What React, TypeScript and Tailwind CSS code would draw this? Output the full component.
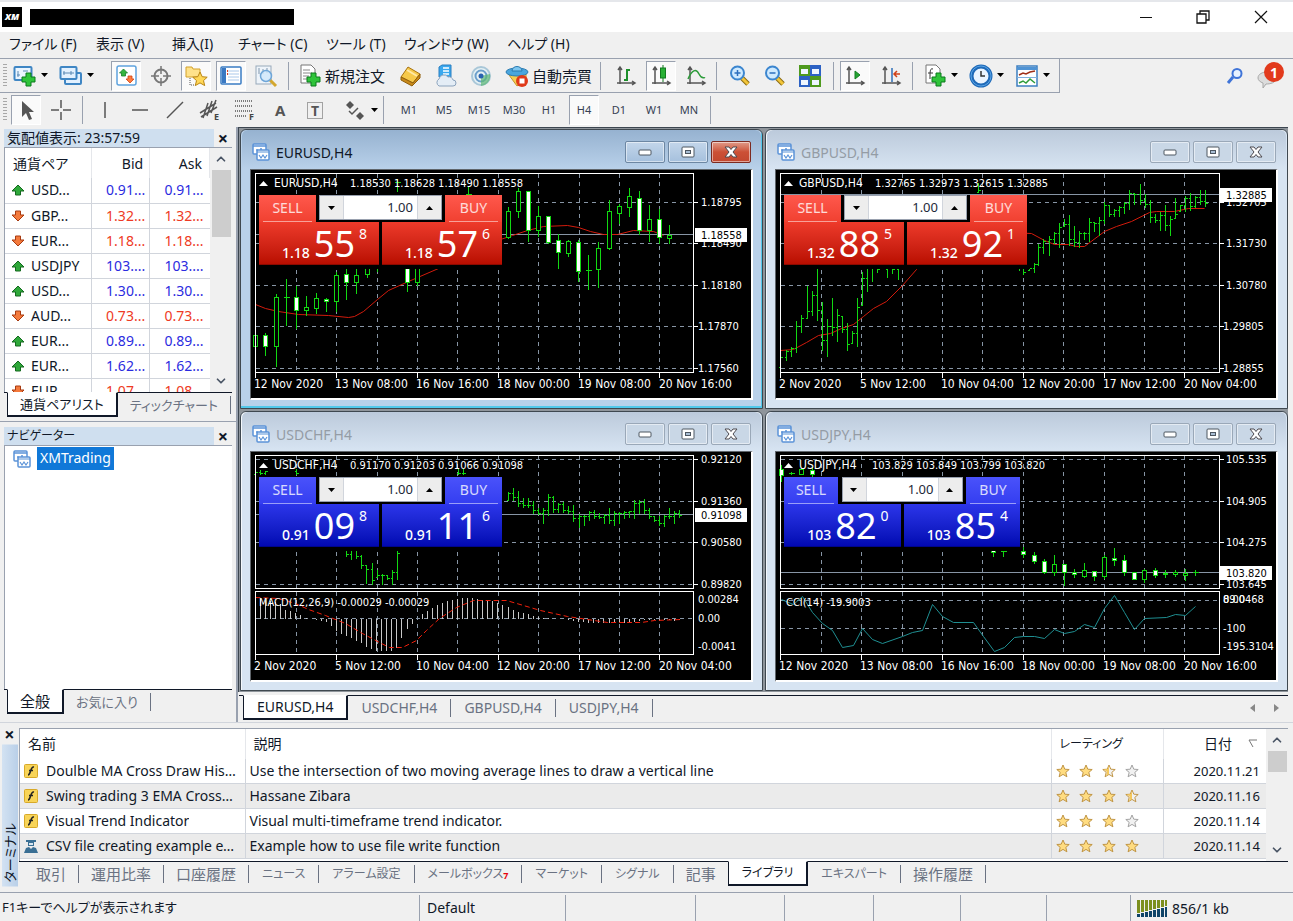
import React, { useState } from 'react';
import clsx from 'clsx';
import { ChevronDown, ChevronUp } from 'lucide-react';

type Bar = [x: number, high: number, low: number];
type Candle = [x: number, high: number, low: number, top: number, bottom: number, filled: 0 | 1];
type Label = [y: number, text: string];

interface ChartData {
  symbol: string;
  quotes: string;
  quotesX: number;
  gridY: number[];
  priceY: number;
  price: string;
  right: number;
  prices: Label[];
  times: string[];
  bars?: Bar[];
  candles?: Candle[];
  average?: string;
  indicator?: 'macd' | 'cci';
  tone: 'red' | 'blue';
  compact?: boolean;
  sell: [string, string, string];
  buy: [string, string, string];
}

const TIMES_LONG = ['2 Nov 2020', '5 Nov 12:00', '10 Nov 04:00', '12 Nov 20:00', '17 Nov 12:00', '20 Nov 04:00'];
const TIMES_SHORT = ['12 Nov 2020', '13 Nov 08:00', '16 Nov 16:00', '18 Nov 00:00', '19 Nov 08:00', '20 Nov 16:00'];
const GRID_X = [45, 85, 126, 166, 206, 247, 287, 328, 368, 408];

const charts: ChartData[] = [
  {
    symbol: 'EURUSD,H4',
    quotes: '1.18530 1.18628 1.18490 1.18558',
    quotesX: 99,
    gridY: [32, 73, 115, 156, 198],
    priceY: 64,
    price: '1.18558',
    right: 442,
    prices: [[32, '1.18795'], [73, '1.18490'], [115, '1.18180'], [156, '1.17870'], [198, '1.17560']],
    times: TIMES_SHORT,
    candles: [
      [4, 156, 180, 165, 176, 0], [14, 162, 185, 165, 176, 1], [25, 123, 196, 127, 176, 0], [35, 108, 155, 127, 127, 0],
      [45, 115, 158, 127, 140, 1], [55, 125, 145, 137, 140, 0], [65, 122, 143, 128, 138, 0], [75, 127, 141, 129, 131, 1],
      [85, 101, 141, 105, 131, 0], [95, 97, 129, 104, 112, 1], [105, 98, 123, 105, 112, 0], [116, 90, 107, 90, 104, 0],
      [126, 90, 101, 90, 90, 0], [146, 8, 21, 12, 12, 0], [156, 90, 121, 90, 112, 1], [166, 90, 115, 90, 112, 0],
      [217, 16, 24, 24, 24, 0], [257, 36, 68, 41, 67, 0], [267, 17, 47, 21, 41, 0], [277, 21, 71, 21, 60, 1],
      [287, 35, 66, 46, 60, 0], [297, 45, 73, 46, 72, 1], [307, 63, 98, 70, 82, 1], [317, 69, 86, 71, 83, 0],
      [327, 69, 111, 72, 101, 1], [337, 84, 119, 100, 100, 0], [347, 71, 117, 78, 99, 0], [358, 29, 79, 41, 78, 0],
      [368, 33, 53, 36, 43, 0], [378, 17, 46, 26, 37, 0], [388, 20, 64, 28, 60, 1], [398, 34, 71, 49, 60, 0],
      [408, 38, 73, 49, 67, 1], [418, 54, 73, 65, 68, 0],
    ],
    average:
      'M4 134 14 138 27 141 47 144 77 145 97 147 103 146 112 141 126 129 137 120 157 111 187 98 210 86 240 72 261 65 276 60 292 56 316 55 327 57 339 61 352 64 366 64 382 60 402 61 412 65',
    tone: 'red',
    sell: ['1.18', '55', '8'],
    buy: ['1.18', '57', '6'],
  },
  {
    symbol: 'GBPUSD,H4',
    quotes: '1.32765 1.32973 1.32615 1.32885',
    quotesX: 99,
    gridY: [32, 73, 115, 156, 198],
    priceY: 24,
    price: '1.32885',
    right: 443,
    prices: [[32, '1.32705'], [73, '1.31730'], [115, '1.30780'], [156, '1.29805'], [198, '1.28855']],
    times: TIMES_LONG,
    bars: [
      [4, 185, 197], [10, 179, 190], [15, 176, 186], [20, 150, 182], [25, 144, 162], [31, 115, 148], [36, 120, 145],
      [41, 98, 150], [46, 131, 180], [51, 148, 186], [56, 127, 165], [61, 138, 171], [66, 146, 162], [71, 152, 180],
      [76, 160, 173], [81, 127, 176], [86, 101, 135], [91, 90, 121], [96, 90, 111], [101, 85, 102], [111, 85, 107],
      [116, 85, 103], [122, 90, 109], [202, 12, 22], [243, 92, 100], [247, 92, 104], [253, 98, 100], [258, 92, 102],
      [262, 73, 95], [267, 68, 83], [273, 65, 85], [278, 61, 73], [283, 52, 77], [288, 48, 56], [293, 44, 75],
      [298, 55, 76], [303, 60, 77], [308, 61, 69], [313, 47, 71], [318, 51, 61], [323, 46, 65], [328, 31, 53],
      [333, 34, 46], [338, 38, 46], [343, 35, 46], [348, 31, 43], [353, 19, 39], [358, 22, 34], [364, 13, 34],
      [369, 23, 37], [374, 29, 52], [379, 43, 52], [384, 41, 60], [389, 34, 60], [394, 45, 65], [399, 27, 48],
      [404, 34, 41], [409, 25, 41], [414, 22, 40], [419, 25, 37], [424, 19, 34], [429, 19, 36],
    ],
    average:
      'M4 180 17 179 30 172 42 165 54 163 65 158 77 154 87 146 97 138 110 131 126 115 140 99 180 60 255 63 268 70 278 74 292 74 300 76 308 76 328 61 340 56 355 51 373 42 380 41 398 41 412 38 428 38',
    tone: 'red',
    sell: ['1.32', '88', '5'],
    buy: ['1.32', '92', '1'],
  },
  {
    symbol: 'USDCHF,H4',
    quotes: '0.91170 0.91203 0.91066 0.91098',
    quotesX: 99,
    gridY: [7, 49, 90, 132],
    priceY: 62,
    price: '0.91098',
    right: 442,
    prices: [[7, '0.92120'], [49, '0.91360'], [90, '0.90580'], [132, '0.89820'], [147, '0.00284'], [166, '0.00'], [194, '-0.0041']],
    times: TIMES_LONG,
    bars: [
      [4, 10, 22], [9, 17, 22], [14, 18, 22], [45, 16, 22], [207, 16, 22], [212, 16, 22], [95, 96, 104], [100, 96, 107],
      [105, 96, 106], [110, 102, 116], [115, 113, 131], [121, 110, 132], [126, 117, 125], [131, 121, 132], [136, 122, 127],
      [141, 117, 132], [146, 94, 127], [257, 39, 48], [262, 35, 48], [267, 38, 54], [272, 45, 55], [277, 45, 55],
      [282, 48, 61], [287, 55, 62], [292, 55, 71], [297, 41, 63], [302, 43, 60], [307, 50, 60], [312, 49, 60],
      [317, 53, 61], [322, 52, 69], [328, 61, 75], [333, 62, 73], [338, 58, 68], [343, 57, 66], [348, 60, 66],
      [353, 61, 71], [358, 55, 71], [363, 58, 73], [368, 59, 71], [373, 58, 66], [378, 58, 65], [383, 47, 66],
      [388, 47, 61], [393, 46, 61], [398, 55, 66], [403, 63, 69], [408, 63, 73], [413, 62, 74], [418, 55, 66],
      [423, 58, 71], [428, 57, 65],
    ],
    indicator: 'macd',
    tone: 'blue',
    sell: ['0.91', '09', '8'],
    buy: ['0.91', '11', '6'],
  },
  {
    symbol: 'USDJPY,H4',
    quotes: '103.829 103.849 103.799 103.820',
    quotesX: 96,
    gridY: [7, 49, 90, 132],
    priceY: 120,
    price: '103.820',
    right: 443,
    prices: [[7, '105.535'], [49, '104.905'], [90, '104.275'], [132, '103.645'], [147, '89.0468'], [147, '0.00'], [176, '-100'], [194, '-195.3104']],
    times: TIMES_SHORT,
    candles: [
      [5, 12, 29, 17, 23, 1], [15, 19, 22, 21, 21, 0], [25, 16, 22, 17, 22, 0], [36, 14, 24, 18, 22, 1],
      [217, 94, 104, 98, 100, 1], [227, 99, 104, 99, 99, 0], [247, 94, 105, 99, 102, 1], [258, 99, 111, 103, 109, 1],
      [268, 106, 121, 109, 120, 1], [278, 102, 123, 112, 120, 0], [288, 111, 133, 112, 120, 1], [298, 116, 125, 120, 122, 1],
      [308, 110, 125, 118, 124, 0], [318, 119, 128, 119, 124, 1], [328, 102, 126, 105, 124, 0], [338, 95, 113, 106, 108, 1],
      [348, 102, 123, 108, 120, 1], [358, 120, 127, 120, 127, 1], [368, 116, 130, 118, 127, 0], [379, 115, 125, 118, 123, 1],
      [389, 117, 125, 121, 122, 0], [399, 117, 124, 120, 122, 0], [409, 116, 128, 121, 123, 0], [419, 117, 123, 120, 120, 0],
    ],
    indicator: 'cci',
    tone: 'blue',
    compact: true,
    sell: ['103', '82', '0'],
    buy: ['103', '85', '4'],
  },
];

const MACD_LEVELS = [
  -20, -20, -19, -18, -17, -15, -9, -8, -6, -4, -1, 0, 1, 2, 3, 7, 12, 15, 17, 19, 22, 24, 28, 30, 32, 32, 32, 32, 29, 19,
  10, 5, 0, -5, -8, -11, -14, -16, -18, -19, -20, -21, -21, -21, -20, -19, -18, -18, -16, -14, -12, -9, -7, -6, -5, -3, -2,
  -1, -1, 0, 0, 0, 1, 2, 3, 3, 4, 4, 4, 4, 4, 4, 4, 4, 3, 3, 2, 1, 1, 1, 2, 1, 1, 2, 1,
];
const MACD_SIGNAL =
  'M4 145 27 146 44 151 57 157 74 163 94 171 111 181 128 190 138 195 151 195 165 188 175 178 188 166 205 155 222 148 255 148 289 158 316 164 336 167 356 170 390 170 403 168 430 167';
const CCI_LINE =
  'M5 147 17 152 26 144 36 160 46 171 56 178 66 195 77 193 86 176 96 187 106 191 126 184 136 180 146 178 156 152 166 164 177 170 197 170 207 184 218 199 228 195 238 185 247 184 258 184 268 186 278 177 288 181 298 179 308 172 318 175 328 156 338 143 348 160 358 177 368 166 390 165 399 162 409 163 419 154';

// Open and close ticks lean towards the neighbouring bars
const barPath = (bars: Bar[]) => {
  let previous = bars[0][2];
  return bars
    .map(([x, high, low], i) => {
      const next = bars[i + 1] ?? bars[i];
      const rising = next[1] + next[2] < high + low;
      const open = Math.min(Math.max(previous, high), low);
      const close = Math.round(rising ? high + (low - high) * 0.2 : high + (low - high) * 0.8);
      previous = close;
      return `M${x} ${high}V${low}M${x - 2} ${open}H${x}M${x} ${close}H${x + 2}`;
    })
    .join('');
};

const CHART_FONT = "font-['DejaVu_Sans_Condensed','Noto_Sans',sans-serif]";

const Chart: React.FC<{ data: ChartData }> = ({ data }) => {
  const { right, indicator, priceY } = data;
  const mainBottom = indicator ? 136 : 202;
  return (
    <svg className={clsx('block h-[228px] w-full bg-black', CHART_FONT)} role="img" aria-label={data.symbol}>
      <g transform="translate(0.5 0.5)" shapeRendering="crispEdges" fill="none">
        <g stroke="#8795a5" strokeDasharray="4 4">
          {data.gridY.map((y) => <path key={y} d={`M4 ${y}H${right}`} />)}
          {GRID_X.map((x) => <path key={x} d={`M${x} 3V202`} />)}
          {indicator === 'macd' && <path d={`M4 166H${right}`} />}
          {indicator === 'cci' && <path d={`M4 148H${right}M4 176H${right}`} />}
        </g>
        <path d={`M4 ${priceY}H${right}`} stroke="#8795a5" />
        {data.average && <path d={data.average} stroke="#d21b0c" shapeRendering="auto" />}
        {data.bars && <path d={barPath(data.bars)} stroke="#12d812" />}
        {data.candles?.map(([x, high, low, top, bottom, filled]) => (
          <g key={x} stroke="#12d812">
            <path d={`M${x} ${high}V${low}`} />
            <rect x={x - 2} y={top} width={4} height={bottom - top} fill={filled ? '#fff' : '#000'} />
            {top === bottom && <path d={`M${x - 3} ${top}H${x + 3}`} />}
          </g>
        ))}
        {indicator === 'macd' && (
          <>
            <path d={MACD_LEVELS.map((v, i) => `M${4 + Math.round(i * 5.05)} 166v${v}`).join('')} stroke="#c8c8c8" />
            <path d={MACD_SIGNAL} stroke="#f0200c" strokeDasharray="5 3" shapeRendering="auto" />
          </>
        )}
        {indicator === 'cci' && <path d={CCI_LINE} stroke="#1f8f92" shapeRendering="auto" />}
        <g stroke="#fff">
          <path d={`M4 3H${right}V${mainBottom}H4Z`} />
          {indicator && <path d={`M4 139H${right}V202H4Z`} />}
          <path d={data.gridY.map((y) => `M${right} ${y}h4`).join('')} />
          <path d={[4, 85, 166, 247, 328, 408].map((x) => `M${x} 202v5`).join('')} />
        </g>
      </g>
      <g fill="#fff" fontSize={11}>
        <path d="M8 16h9l-4.500-5z" />
        <text x={23} y={17} fontSize={12}>{data.symbol}</text>
        <text x={data.quotesX} y={17}>{data.quotes}</text>
        {indicator === 'macd' && <text x={8} y={154}>MACD(12,26,9) -0.00029 -0.00029</text>}
        {indicator === 'cci' && <text x={10} y={154}>CCI(14) -19.9003</text>}
        {data.prices.map(([y, text]) => (
          <text key={text} x={y > 140 ? 447 : 450} y={y + 4}>{text}</text>
        ))}
        <g fontSize={12}>
          {data.times.map((time, i) => <text key={time} x={3 + i * 81} y={218}>{time}</text>)}
        </g>
      </g>
      <rect x={444} y={priceY - 6} width={52} height={14} fill="#fff" />
      <text x={450} y={priceY + 5} fontSize={11}>{data.price}</text>
    </svg>
  );
};

const Price: React.FC<{ parts: [string, string, string]; tone: 'red' | 'blue'; side: string }> = ({ parts, tone, side }) => (
  <button
    aria-label={`${side} ${parts.join('')}`}
    className={clsx(
      'flex h-[43px] flex-1 items-start justify-end border-b pr-3 text-white',
      tone === 'red'
        ? 'border-[#8c0a00] bg-linear-to-b from-[#ee3a2a] to-[#b90d00]'
        : 'border-[#00068c] bg-linear-to-b from-[#2c35ea] to-[#0208b2]',
    )}
  >
    <span className="mt-[21px] mr-1 text-[14px] leading-[20px] font-medium">{parts[0]}</span>
    <span className="text-[36px] leading-[44px]">{parts[1]}</span>
    <span className="mt-[2px] ml-1 text-[14px] leading-[20px]">{parts[2]}</span>
  </button>
);

const SideLabel: React.FC<{ tone: 'red' | 'blue'; compact?: boolean; children: string }> = ({ tone, compact, children }) => (
  <button
    className={clsx(
      'flex h-[27px] flex-col items-center justify-between px-1 text-[14px] leading-[25px] text-white/80',
      compact ? 'w-[54px]' : 'w-[57px]',
      tone === 'red' ? 'bg-linear-to-b from-[#ff584c] to-[#f04030]' : 'bg-linear-to-b from-[#4a52fb] to-[#343df0]',
    )}
  >
    {children}
    <span className="h-px w-full bg-white/50" />
  </button>
);

const TradePanel: React.FC<{ data: ChartData }> = ({ data }) => {
  const [lots, setLots] = useState('1.00');
  const step = (delta: number) => setLots(Math.max(0.01, Number(lots) + delta).toFixed(2));
  return (
    <div className={clsx('absolute top-[25px] left-2 bg-black pb-1', data.compact ? 'w-[236px]' : 'w-[243px]')}>
      <div className="flex justify-between">
        <SideLabel tone={data.tone} compact={data.compact}>SELL</SideLabel>
        <div className={clsx('flex h-[25px] border border-gray-400 bg-white', data.compact ? 'w-[121px]' : 'w-[123px]')}>
          <button aria-label="Decrease volume" onClick={() => step(-0.01)} className="grid w-6 place-items-center border-r border-gray-300 bg-[#ededed]">
            <svg width="8" height="4"><path d="M0 0h7L3.500 4z" /></svg>
          </button>
          <input
            aria-label="Volume"
            value={lots}
            onChange={(e) => setLots(e.target.value)}
            className="min-w-0 flex-1 pr-1 text-right text-[13px] text-gray-800 outline-none"
          />
          <button aria-label="Increase volume" onClick={() => step(0.01)} className="grid w-6 place-items-center border-l border-gray-300 bg-[#ededed]">
            <svg width="8" height="4"><path d="M0 4h7L3.500 0z" /></svg>
          </button>
        </div>
        <SideLabel tone={data.tone} compact={data.compact}>BUY</SideLabel>
      </div>
      <div className="flex gap-[3px]">
        <Price parts={data.sell} tone={data.tone} side="Sell" />
        <Price parts={data.buy} tone={data.tone} side="Buy" />
      </div>
    </div>
  );
};

const ChartIcon = () => (
  <svg width="18" height="18" viewBox="0 0 18 18" fill="#fff" stroke="#5b93d8" strokeWidth="1.500">
    <rect x="1" y="1" width="13" height="10" rx="1" />
    <path d="M1 3h13M4 7h2M9 5v3" />
    <rect x="5" y="7" width="12" height="10" rx="1" />
    <path d="M5 9h12M7 12l2 3 2-3 2 3 2-3" strokeWidth="1.200" />
  </svg>
);

const ChartWindow: React.FC<{ data: ChartData; active?: boolean }> = ({ data, active }) => {
  const control = clsx(
    'grid h-[22px] w-10 place-items-center rounded-xs border shadow-[inset_0_0_0_1px_rgba(255,255,255,0.5)]',
    active ? 'border-[#6d87a3] bg-linear-to-b from-[#c3d6ea] to-[#a5c0dd]' : 'border-[#9aa8b8] bg-[#c9d7e6]',
  );
  return (
    <section
      className={clsx(
        'min-w-0 rounded-t-md border border-[#3f4850] px-[9px] pb-2',
        active ? 'bg-[#b9d1ea] shadow-[inset_-1px_-2px_0_#52c8ea]' : 'bg-[#d7e4f2] shadow-[inset_1px_1px_0_#f4f8fc]',
      )}
    >
      <header
        className={clsx(
          '-mx-2 flex h-[39px] items-start rounded-t-md px-2 pt-[11px]',
          active ? 'bg-linear-to-b from-[#96b2d0] to-[#b9d1ea]' : 'bg-linear-to-b from-[#bccadb] to-[#d7e4f2]',
        )}
      >
        <span className="mt-[2px] ml-[2px]"><ChartIcon /></span>
        <h2 className={clsx('ml-[6px] flex-1 text-[14px] leading-6', active ? 'text-gray-900' : 'text-[#949ca5]')}>{data.symbol}</h2>
        <div className="flex gap-[3px] pr-[2px]">
          <button aria-label="Minimize" className={control}>
            <svg width="14" height="8"><rect x="1" y="2" width="12" height="5" rx="1" fill="#fff" stroke="#4d5660" /></svg>
          </button>
          <button aria-label="Maximize" className={control}>
            <svg width="14" height="12" fill="#fff" stroke="#4d5660">
              <rect x="1" y="1" width="12" height="10" rx="1" />
              <rect x="4.500" y="4.500" width="5" height="3" fill="#a9bed4" />
            </svg>
          </button>
          <button
            aria-label="Close"
            className={clsx(control, active && 'border-[#7c2a20] from-[#e09a88] via-[#cc5036] to-[#c2472f]')}
          >
            <svg width="14" height="12" viewBox="0 0 14 12" fill="#fff" stroke="#4d4a50">
              <path d="M1 1h4l2 2.500L9 1h4L9 6l4 5H9L7 8.500 5 11H1l4-5z" />
            </svg>
          </button>
        </div>
      </header>
      <div className="relative border border-r-2 border-b-2 border-[#60666c] border-r-white border-b-white">
        <Chart data={data} />
        <TradePanel data={data} />
      </div>
    </section>
  );
};

const plus = <path d="M13 9h5v4h4v5h-4v4h-5v-4H9v-5h4z" fill="#2fc43a" stroke="#0b7a1c" />;
const lens = (
  <>
    <path d="M14 14l6 6" stroke="#8a6a10" strokeWidth="5" />
    <path d="M14 14l6 6" stroke="#f2c53a" strokeWidth="3" />
    <circle cx="9.500" cy="9" r="6.500" fill="#cfeaff" stroke="#3c86cf" strokeWidth="2" />
  </>
);
const axes = <path d="M6 3v17M3 19h18M4 6l2-3 2 3M18 17l3 2-3 2" stroke="#555" strokeWidth="1.500" />;

const icons: Record<string, React.ReactNode> = {
  newChart: (
    <>
      <rect x="1.500" y="3" width="17" height="13" rx="1" fill="#eaf5ff" stroke="#3f86c4" strokeWidth="2" />
      <path d="M5 7v6M4 11h3M10 7h5" stroke="#5a89b4" />
      {plus}
    </>
  ),
  profiles: (
    <>
      <rect x="6" y="9" width="16" height="11" rx="1" fill="#e3f1ff" stroke="#3f86c4" strokeWidth="2" />
      <rect x="1.500" y="3" width="16" height="12" rx="1" fill="#e3f1ff" stroke="#3f86c4" strokeWidth="2" />
      <path d="M4 9h11M5 7v4M12 7v4" stroke="#5a89b4" />
    </>
  ),
  marketWatch: (
    <>
      <rect x="3" y="2" width="19" height="19" rx="2" fill="#fff" stroke="#5fa3de" strokeWidth="1.500" />
      <path d="M9.500 5l4 4h-2v3h-4V9h-2z" fill="#35b53f" stroke="#1b7e2a" strokeWidth=".8" />
      <path d="M16 19l4-4h-2v-3h-4v3h-2z" fill="#ff7a3d" stroke="#cf4212" strokeWidth=".8" />
    </>
  ),
  dataWindow: (
    <g stroke="#777" strokeWidth="2">
      <circle cx="12" cy="12" r="6.500" />
      <path d="M12 2v8M12 14v8M2 12h8M14 12h8" strokeWidth="1.500" />
    </g>
  ),
  navigator: (
    <>
      <path d="M2 3h6l1 2h7v8H2z" fill="#ffe28a" stroke="#d2a12c" />
      <path d="M6 14v7h4" stroke="#555" strokeDasharray="1 1" />
      <path d="M16 8l2.200 4.700 5 .5-3.700 3.400 1.200 5-4.700-2.700-4.700 2.700 1.200-5-3.700-3.400 5-.5z" fill="#ffd757" stroke="#b98513" />
    </>
  ),
  terminal: (
    <>
      <rect x="2" y="3" width="20" height="17" rx="1" fill="#fff" stroke="#3a7cc4" strokeWidth="1.500" />
      <path d="M3 4h4v15H3z" fill="#3a78c2" />
      <path d="M9 7h11M9 10h11M9 13h11M9 16h11" stroke="#a9c8ea" />
      <path d="M8 7h1M8 10h1" stroke="#e04020" strokeWidth="2" />
    </>
  ),
  tester: (
    <>
      <rect x="2" y="2" width="15" height="18" fill="#eef4fa" stroke="#98a9ba" />
      <path d="M5 4v6M9 5v5M13 4v5" stroke="#7f95ac" />
      <path d="M16 16l6 6" stroke="#d3a72e" strokeWidth="3" />
      <circle cx="12" cy="12" r="5.500" fill="#cfe7fb" fillOpacity=".8" stroke="#6fa6d8" strokeWidth="1.500" />
    </>
  ),
  newOrder: (
    <>
      <path d="M3 1h10l4 4v14H3z" fill="#fff" stroke="#777" />
      <path d="M5 6h7M5 9h9M5 12h6M5 15h4" stroke="#888" />
      {plus}
    </>
  ),
  book: (
    <>
      <path d="M2 13L9 3l12 7-7 9z" fill="#f6c94a" stroke="#a87310" />
      <path d="M2 13v3l11 6 8-8v-4l-7 9z" fill="#c98a1a" stroke="#8f5f0c" />
      <path d="M8 6l10 6" stroke="#ffe9a6" strokeWidth="2" />
    </>
  ),
  cloud: (
    <>
      <path d="M5 3l3-2h9v12H5z" fill="#3aa8ee" stroke="#2a7fc0" />
      <path d="M9 4h6M9 7h6M9 10h6" stroke="#fff" strokeWidth="1.500" />
      <path d="M5 22a4 4 0 0 1 0-7 5 5 0 0 1 9-2 4 4 0 0 1 5 3 3 3 0 0 1 0 6z" fill="#e4edf6" stroke="#8ca3bd" />
    </>
  ),
  signal: (
    <>
      <circle cx="12" cy="12" r="9" stroke="#a9c7d8" strokeWidth="2" fill="#e6f1f4" />
      <circle cx="12" cy="12" r="5.500" stroke="#6ca0cc" strokeWidth="2" />
      <path d="M12 12v10a10 10 0 0 0 9-12z" fill="#5cb873" fillOpacity=".7" />
      <circle cx="12" cy="12" r="2.500" fill="#2a63b0" />
    </>
  ),
  expert: (
    <>
      <path d="M4 11l8 11 9-7V9z" fill="#f6cf52" stroke="#c4952a" />
      <ellipse cx="12" cy="8" rx="11" ry="4" fill="#4aa6de" stroke="#2a7ab0" />
      <path d="M7 7c0-6 10-6 10 0z" fill="#7cc6f0" stroke="#2a7ab0" />
      <circle cx="17" cy="17" r="6" fill="#e03a1a" />
      <rect x="14.500" y="14.500" width="5" height="5" fill="#fff" />
    </>
  ),
  barChart: <>{axes}<path d="M13 5v12M13 6h3M10 16h3" stroke="#1d8f2b" strokeWidth="2" /></>,
  candleChart: <>{axes}<path d="M14 1v17" stroke="#117a1e" /><rect x="11.500" y="4" width="5" height="10" fill="#27b034" stroke="#117a1e" /></>,
  lineChart: <>{axes}<path d="M4 15c4-9 8-11 11-5s5 3 6 4" stroke="#2d9c3a" strokeWidth="1.500" /></>,
  zoomIn: <>{lens}<path d="M6.500 9h6M9.500 6v6" stroke="#2c6fbe" strokeWidth="1.500" /></>,
  zoomOut: <>{lens}<path d="M6.500 9h6" stroke="#2c6fbe" strokeWidth="1.500" /></>,
  tile: (
    <>
      <path d="M1 1h11v11H1zM12 12h11v11H12z" fill="#4f9a1e" />
      <path d="M12 1h11v11H12zM1 12h11v11H1z" fill="#2d62c4" />
      <path d="M3 5h7v5H3zM14 5h7v5h-7zM3 16h7v5H3zM14 16h7v5h-7z" fill="#eef6ff" />
    </>
  ),
  autoScroll: <>{axes}<path d="M12 7l5 4-5 4z" fill="#25a533" stroke="#148022" /></>,
  shift: <>{axes}<path d="M13 4v14" stroke="#2f6fb8" strokeWidth="1.500" /><path d="M21 10h-5M18 7l-3 3 3 3" stroke="#d04018" strokeWidth="1.500" /></>,
  indicators: (
    <>
      <path d="M3 1h10l4 4v14H3z" fill="#fff" stroke="#777" />
      <path d="M10 5c-3-1-3 2-3 10M5 9h5" stroke="#333" />
      {plus}
    </>
  ),
  periods: (
    <>
      <circle cx="12" cy="12" r="9.500" fill="#eaf4ff" stroke="#1f6ab8" strokeWidth="4" />
      <circle cx="12" cy="12" r="10" stroke="#5aa5e8" />
      <path d="M12 7v5h4" stroke="#333" strokeWidth="1.500" />
    </>
  ),
  templates: (
    <>
      <rect x="2" y="2" width="20" height="20" fill="#fff" stroke="#3c7fc0" strokeWidth="1.500" />
      <path d="M2 3h20v3H2z" fill="#4f93d4" />
      <path d="M4 11l4-2 3 1 4-2 5-1" stroke="#a03018" strokeWidth="1.500" />
      <path d="M2 13.500h20" stroke="#7fb0de" />
      <path d="M4 19l4-2 3 2 4-4 5 4" stroke="#2d9c3a" strokeWidth="1.500" />
    </>
  ),
  cursor: <path d="M8 3v16l4-4 3 7 3-1-3-7h5z" fill="#555" />,
  crosshair: <path d="M12 2v8M12 14v8M2 12h8M14 12h8" stroke="#555" strokeWidth="1.500" />,
  vLine: <path d="M12 4v16" stroke="#555" strokeWidth="1.500" />,
  hLine: <path d="M4 12h16" stroke="#555" strokeWidth="1.500" />,
  trend: <path d="M4 20L20 4" stroke="#555" strokeWidth="1.500" />,
  channel: (
    <>
      <path d="M2 15L18 5M3 19L19 9M5 20l5-15M9 18l5-15M13 15l5-13" stroke="#555" strokeWidth="1.500" />
      <text x="16" y="22" fontSize="9" fontWeight="700" fill="#444">E</text>
    </>
  ),
  fibo: (
    <>
      <path d="M2 3h18M2 8h18M2 13h18M2 18h12" stroke="#555" strokeDasharray="1 1" strokeWidth="1.500" />
      <text x="16" y="22" fontSize="9" fontWeight="700" fill="#444">F</text>
    </>
  ),
  text: <text x="7" y="18" fontSize="15" fontWeight="700" fill="#555">A</text>,
  label: (
    <>
      <rect x="4.500" y="4.500" width="15" height="16" stroke="#555" strokeDasharray="1 1" />
      <text x="8" y="18" fontSize="14" fontWeight="700" fill="#555">T</text>
    </>
  ),
  arrows: (
    <>
      <path d="M7 3l4 4-4 4-4-4zM17 14l4 4-4 4-4-4z" fill="#555" />
      <path d="M6 13l3 3 6-6" stroke="#555" strokeWidth="1.500" />
    </>
  ),
};

const Icon: React.FC<{ name: string }> = ({ name }) => (
  <svg className="shrink-0 overflow-visible" width="24" height="24" viewBox="0 0 24 24" fill="none">{icons[name]}</svg>
);

const ToolButton: React.FC<{ icon?: string; title: string; pressed?: boolean; text?: string }> = ({ icon, title, pressed, text }) => (
  <button
    title={title}
    aria-pressed={pressed}
    className={clsx(
      'grid h-[30px] w-[30px] shrink-0 place-items-center border text-[11px] text-gray-700',
      pressed ? 'border-gray-400 border-r-white border-b-white bg-[#fafafa]' : 'border-transparent',
    )}
  >
    {icon ? <Icon name={icon} /> : text}
  </button>
);

const MenuButton: React.FC<{ icon: string; title: string }> = ({ icon, title }) => (
  <button title={title} className="flex h-[30px] w-[46px] shrink-0 items-center gap-1 pl-[6px]">
    <Icon name={icon} />
    <svg width="8" height="5"><path d="M0 0h7L3.500 4z" /></svg>
  </button>
);

const LabelButton: React.FC<{ icon: string; children: string }> = ({ icon, children }) => (
  <button className="flex h-[30px] shrink-0 items-center gap-[3px] text-[15px] leading-5 whitespace-nowrap">
    <Icon name={icon} />
    {children}
  </button>
);

const Divider = () => <span className="h-7 w-px shrink-0 bg-gray-400" />;
const Grip = () => (
  <span className="h-6 w-1 shrink-0 bg-[repeating-linear-gradient(#a8a8a8_0_1px,#f0f0f0_1px_3px)]" />
);

interface Tab {
  label: string;
  kana?: boolean;
  badge?: string;
}

interface TabStripProps {
  tabs: Tab[];
  active: number;
  size?: 'tight' | 'wide';
  className?: string;
}

const TabStrip: React.FC<TabStripProps> = ({ tabs, active, size, className }) => (
  <div role="tablist" className={clsx('flex h-[25px] shrink-0 border-t border-gray-900', className)}>
    {tabs.map(({ label, kana, badge }, i) => (
      <button
        key={label}
        role="tab"
        aria-selected={i === active}
        className={clsx(
          'relative flex shrink-0 items-center leading-5 whitespace-nowrap',
          size === 'wide' && 'px-[13px] text-[14px]',
          size === 'tight' && kana && 'px-[13px] text-[12px]',
          !size && kana && 'px-3 text-[13px]',
          size !== 'wide' && !kana && 'px-3 text-[15px]',
          i === active
            ? '-mt-px border border-r-2 border-b-2 border-gray-900 border-t-white bg-white text-gray-900'
            : 'my-[3px] text-gray-500',
          i !== active && i + 1 !== active && 'border-r border-gray-500',
        )}
      >
        {label}
        {badge && <sub className="text-[9px] font-bold text-red-600">{badge}</sub>}
      </button>
    ))}
  </div>
);

const ScrollBar: React.FC<{ thumb: string }> = ({ thumb }) => (
  <div className="flex w-[22px] shrink-0 flex-col items-center bg-[#f0f0f0] text-gray-600">
    <button aria-label="Scroll up" className="grid h-[22px] place-items-center"><ChevronUp size={14} strokeWidth={3} /></button>
    <span className={clsx('w-[19px] bg-[#cdcdcd]', thumb)} />
    <button aria-label="Scroll down" className="mt-auto grid h-[22px] place-items-center"><ChevronDown size={14} strokeWidth={3} /></button>
  </div>
);

const PanelTitle: React.FC<{ kana?: boolean; children: string }> = ({ kana, children }) => (
  <div className="flex h-[19px] items-center">
    <h2 className={clsx('h-[18px] flex-1 bg-[#cfdfef] pl-[3px] leading-[18px]', kana ? 'text-[12px]' : 'text-[14px]')}>{children}</h2>
    <button aria-label="Close" className="w-[18px] text-[18px] leading-4 font-bold">×</button>
  </div>
);

const quotes: [up: boolean, symbol: string, bid: string, ask: string][] = [
  [true, 'USD...', '0.91...', '0.91...'],
  [false, 'GBP...', '1.32...', '1.32...'],
  [false, 'EUR...', '1.18...', '1.18...'],
  [true, 'USDJPY', '103....', '103....'],
  [true, 'USD...', '1.30...', '1.30...'],
  [false, 'AUD...', '0.73...', '0.73...'],
  [true, 'EUR...', '0.89...', '0.89...'],
  [true, 'EUR...', '1.62...', '1.62...'],
  [false, 'EUR...', '1.07...', '1.08...'],
];

const MarketWatch = () => (
  <section className="flex flex-col pt-px pr-1 pb-1 pl-1">
    <PanelTitle>気配値表示: 23:57:59</PanelTitle>
    <div className="flex h-[245px] overflow-hidden border-t border-l border-gray-400 bg-white">
      <table className="h-fit flex-1 table-fixed text-[14px]">
        <colgroup>
          <col className="w-[87px]" />
          <col className="w-[58px]" />
          <col className="w-[60px]" />
        </colgroup>
        <thead>
          <tr className="h-[30px]">
            <th className="pl-2 text-left font-normal">通貨ペア</th>
            <th className="border-l border-gray-200 pr-[6px] text-right font-normal">Bid</th>
            <th className="border-x border-gray-200 pr-[7px] text-right font-normal">Ask</th>
          </tr>
        </thead>
        <tbody>
          {quotes.map(([up, symbol, bid, ask], i) => (
            <tr key={i} className="h-[25px] leading-5">
              <td className="border-b border-gray-300 pl-[6px]">
                <span className="flex items-center gap-[6px]">
                  <svg className={clsx('shrink-0', !up && 'rotate-180')} width="14" height="12" viewBox="0 0 14 12">
                    <path d="M7 1l6 6h-3.500v4h-5V7H1z" fill={up ? '#2fa83a' : '#f47a3c'} stroke={up ? '#14691f' : '#a83a10'} />
                  </svg>
                  {symbol}
                </span>
              </td>
              <td className={clsx('border-b border-l border-gray-300 pr-1 text-right', up ? 'text-[#2b2be0]' : 'text-[#ee3a24]')}>{bid}</td>
              <td className={clsx('border-b border-l border-gray-300 pr-[6px] text-right', up ? 'text-[#2b2be0]' : 'text-[#ee3a24]')}>{ask}</td>
            </tr>
          ))}
        </tbody>
      </table>
      <ScrollBar thumb="h-[67px]" />
    </div>
    <TabStrip className="pl-[3px]" active={0} tabs={[{ label: '通貨ペアリスト', kana: true }, { label: 'ティックチャート', kana: true }]} />
  </section>
);

const Navigator = () => (
  <section className="flex flex-1 flex-col border-t border-gray-400 pt-1 pr-1 pb-2 pl-1">
    <PanelTitle kana>ナビゲーター</PanelTitle>
    <div className="flex-1 border-t border-l border-gray-400 bg-white pt-px pl-2">
      <button className="flex items-center gap-[6px] text-[14px]">
        <ChartIcon />
        <span className="h-[23px] bg-[#1078d8] px-[3px] leading-[22px] text-white">XMTrading</span>
      </button>
    </div>
    <TabStrip className="pl-[3px]" active={0} tabs={[{ label: '全般' }, { label: 'お気に入り', kana: true }]} />
  </section>
);

const library = [
  { name: 'Doulble MA Cross Draw Histogram', description: 'Use the intersection of two moving average lines to draw a vertical line', rating: 2.5, date: '2020.11.21' },
  { name: 'Swing trading 3 EMA Crossover', description: 'Hassane Zibara', rating: 3.5, date: '2020.11.16' },
  { name: 'Visual Trend Indicator', description: 'Visual multi-timeframe trend indicator.', rating: 3, date: '2020.11.14' },
  { name: 'CSV file creating example expert', description: 'Example how to use file write function', rating: 4, date: '2020.11.14', expert: true },
];

const STAR = 'M7 1l1.800 4.200 4.400.3-3.400 2.900 1.100 4.400L7 10.400l-3.900 2.400 1.100-4.400L.8 5.500l4.400-.3z';

const Stars: React.FC<{ rating: number }> = ({ rating }) => (
  <span className="flex gap-[9px]" role="img" aria-label={`${rating} / 4`}>
    {[0, 1, 2, 3].map((i) => (
      <svg key={i} width="14" height="14" viewBox="0 0 14 14">
        <path d={STAR} fill={rating >= i + 1 ? '#ffdc80' : '#f1f1f1'} stroke={rating > i ? '#c09545' : '#a3a3a3'} />
        {rating > i && rating < i + 1 && <path d="M7 2v8l-3 2 1-4-3-2.500 3.500-.5z" fill="#f5c85c" />}
      </svg>
    ))}
  </span>
);

const terminalTabs: Tab[] = [
  { label: '取引' },
  { label: '運用比率' },
  { label: '口座履歴' },
  { label: 'ニュース', kana: true },
  { label: 'アラーム設定', kana: true },
  { label: 'メールボックス', kana: true, badge: '7' },
  { label: 'マーケット', kana: true },
  { label: 'シグナル', kana: true },
  { label: '記事' },
  { label: 'ライブラリ', kana: true },
  { label: 'エキスパート', kana: true },
  { label: '操作履歴' },
];

const Terminal = () => (
  <section className="flex border-t border-gray-300 bg-[#f0f0f0] pr-[5px] pb-[6px]">
    <div className="flex w-[19px] shrink-0 flex-col items-center">
      <button aria-label="Close" className="h-[22px] text-[18px] leading-5 font-bold">×</button>
      <h2 className="flex w-4 flex-1 rotate-180 items-center bg-linear-to-r from-[#b9cfe8] to-[#d3e2f2] pt-1 text-[13px] leading-4 [text-orientation:sideways] [writing-mode:vertical-rl]">
        ターミナル
      </h2>
    </div>
    <div className="min-w-0 flex-1 pt-[5px]">
      <div className="flex border-t border-l border-gray-400 bg-white">
        <table className="mb-[2px] w-full min-w-0 flex-1 table-fixed text-[14px]">
          <colgroup>
            <col className="w-[225px]" />
            <col />
            <col className="w-[112px]" />
            <col className="w-[103px]" />
          </colgroup>
          <thead>
            <tr className="h-[30px]">
              <th className="pl-2 text-left font-normal">名前</th>
              <th className="border-l border-gray-200 pl-2 text-left font-normal">説明</th>
              <th className="border-l border-gray-200 pl-2 text-left text-[12px] font-normal">レーティング</th>
              <th className="border-l border-gray-200 font-normal">
                <span className="flex items-center justify-end gap-4 pr-2">
                  日付
                  <svg width="10" height="9"><path d="M9 1H1l4 7" fill="none" stroke="#777" /></svg>
                </span>
              </th>
            </tr>
          </thead>
          <tbody>
            {library.map(({ name, description, rating, date, expert }) => (
              <tr key={name} className="h-[25px] border-b border-gray-300 leading-5 even:bg-[#ebebeb]">
                <td className="pl-1">
                  <span className="flex items-center gap-2 pr-[5px]">
                    {expert ? (
                      <svg className="shrink-0" width="14" height="15" viewBox="0 0 14 15" fill="#3a6f94">
                        <path d="M2 1h10v2H2zM4 3h6v4H4zM0 14l2-5 3-1 2 2 2-2 3 1 2 5z" />
                        <path d="M5 4h4v2H5z" fill="#d8e6f0" />
                      </svg>
                    ) : (
                      <svg className="shrink-0" width="14" height="14" viewBox="0 0 14 14">
                        <rect x=".5" y=".5" width="13" height="13" rx="1" fill="#f8d458" stroke="#d8a928" />
                        <path d="M10 3c-4-1-3 8-6 8M5 6.500h4" fill="none" stroke="#222" strokeWidth="1.500" />
                      </svg>
                    )}
                    <span className="truncate">{name}</span>
                  </span>
                </td>
                <td className="truncate border-l border-gray-300 pl-1">{description}</td>
                <td className="border-l border-gray-300 pl-1"><Stars rating={rating} /></td>
                <td className="border-l border-gray-300 pr-[6px] text-right text-[13px]">{date}</td>
              </tr>
            ))}
          </tbody>
        </table>
        <ScrollBar thumb="h-[21px]" />
      </div>
      <TabStrip className="pl-[5px]" tabs={terminalTabs} active={9} size="tight" />
    </div>
  </section>
);

const menu: [label: string, width: string][] = [
  ['ファイル (F)', 'w-[87px]'],
  ['表示 (V)', 'w-[76px]'],
  ['挿入(I)', 'w-[66px]'],
  ['チャート (C)', 'w-[88px]'],
  ['ツール (T)', 'w-[78px]'],
  ['ウィンドウ (W)', 'w-[103px]'],
  ['ヘルプ (H)', 'w-[80px]'],
];

const periods = ['M1', 'M5', 'M15', 'M30', 'H1', 'H4', 'D1', 'W1', 'MN'];

const Toolbars = () => (
  <div className="border-t border-gray-400">
    <div className="flex h-[34px] items-center">
      <div className="flex h-full items-center border-r border-b border-gray-400 pr-1 pl-[3px]">
        <Grip />
        <MenuButton icon="newChart" title="New chart" />
        <MenuButton icon="profiles" title="Profiles" />
        <div className="mx-[6px]"><Divider /></div>
        <div className="mr-[7px] flex gap-[5px]">
          <ToolButton icon="marketWatch" title="Market watch" pressed />
          <ToolButton icon="dataWindow" title="Data window" />
          <ToolButton icon="navigator" title="Navigator" pressed />
          <ToolButton icon="terminal" title="Terminal" pressed />
          <ToolButton icon="tester" title="Strategy tester" />
        </div>
        <Divider />
        <div className="mr-2 ml-[9px] flex gap-[5px]">
          <LabelButton icon="newOrder">新規注文</LabelButton>
          <span className="w-px" />
          <ToolButton icon="book" title="MetaEditor" />
          <ToolButton icon="cloud" title="Cloud" />
          <ToolButton icon="signal" title="Signals" />
          <span className="ml-1"><LabelButton icon="expert">自動売買</LabelButton></span>
        </div>
        <Divider />
        <div className="mx-[5px]"><Grip /></div>
        <div className="mr-[5px] flex gap-[5px]">
          <ToolButton icon="barChart" title="Bar chart" />
          <ToolButton icon="candleChart" title="Candlesticks" pressed />
          <ToolButton icon="lineChart" title="Line chart" />
        </div>
        <Divider />
        <div className="mx-2 flex gap-[5px]">
          <ToolButton icon="zoomIn" title="Zoom in" />
          <ToolButton icon="zoomOut" title="Zoom out" />
          <ToolButton icon="tile" title="Tile windows" />
        </div>
        <Divider />
        <div className="mx-[6px] flex gap-[6px]">
          <ToolButton icon="autoScroll" title="Auto scroll" pressed />
          <ToolButton icon="shift" title="Chart shift" />
        </div>
        <Divider />
        <div className="ml-1 flex">
          <MenuButton icon="indicators" title="Indicators" />
          <MenuButton icon="periods" title="Periods" />
          <MenuButton icon="templates" title="Templates" />
        </div>
      </div>
      <div className="ml-auto flex items-center gap-3 pr-[9px]">
        <button aria-label="Search">
          <svg width="18" height="18" viewBox="0 0 18 18" fill="#e8f2ff" stroke="#3f74d8" strokeWidth="2">
            <path d="M2 16l5-6" strokeWidth="3" />
            <circle cx="11" cy="6.500" r="4.500" />
          </svg>
        </button>
        <button aria-label="Notifications" className="relative h-7 w-7">
          <svg className="mt-1" width="24" height="24" viewBox="0 0 24 24" fill="#dcdcdc" stroke="#a8a8a8">
            <path d="M2 12c0-8 18-8 18 0 0 5-6 6-10 6l-3 4v-5c-3-1-5-3-5-5z" />
          </svg>
          <span className="absolute top-0 right-0 grid h-5 w-5 place-items-center rounded-full bg-[#e23a1c] text-[14px] font-bold text-white">1</span>
        </button>
      </div>
    </div>
    <div className="flex h-[34px] items-center pl-[3px]">
      <Grip />
      <div className="mr-[6px] ml-1 flex gap-[5px]">
        <ToolButton icon="cursor" title="Cursor" pressed />
        <ToolButton icon="crosshair" title="Crosshair" />
      </div>
      <Divider />
      <div className="mx-[7px] flex gap-[5px]">
        <ToolButton icon="vLine" title="Vertical line" />
        <ToolButton icon="hLine" title="Horizontal line" />
        <ToolButton icon="trend" title="Trendline" />
        <ToolButton icon="channel" title="Equidistant channel" />
        <ToolButton icon="fibo" title="Fibonacci" />
        <ToolButton icon="text" title="Text" />
        <ToolButton icon="label" title="Text label" />
      </div>
      <MenuButton icon="arrows" title="Arrows" />
      <Divider />
      <div className="ml-1"><Grip /></div>
      <div className="mx-[6px] flex gap-[5px]">
        {periods.map((period) => <ToolButton key={period} title={period} text={period} pressed={period === 'H4'} />)}
      </div>
      <Divider />
    </div>
  </div>
);

const TitleBar = () => (
  <header className="flex h-8 items-center border-t-2 border-gray-200 bg-white pl-[2px]">
    <span className="grid h-5 w-5 place-items-center bg-black text-[9px] font-black text-white italic">XM</span>
    <span className="ml-2 h-4 w-[264px] bg-black" />
    <div className="ml-auto flex">
      <button aria-label="Minimize" className="grid h-7 w-[57px] place-items-center">
        <svg width="14" height="14"><path d="M1 7.500h12" stroke="#111" /></svg>
      </button>
      <button aria-label="Restore" className="grid h-7 w-[57px] place-items-center">
        <svg width="14" height="14" fill="none" stroke="#111" strokeWidth="1.300"><path d="M1 4h9v9H1zM4 4V1h9v9h-3" /></svg>
      </button>
      <button aria-label="Close" className="mr-[2px] grid h-7 w-[60px] place-items-center">
        <svg width="14" height="14" stroke="#111" strokeWidth="1.200"><path d="M1 1l12 12M13 1L1 13" /></svg>
      </button>
    </div>
  </header>
);

const StatusBar = () => (
  <footer className="flex h-[29px] items-center border-t border-gray-400 pt-[2px] text-[14px]">
    <span className="min-w-0 flex-1 truncate pl-[2px] text-[13px]">F1キーでヘルプが表示されます</span>
    <span className="h-full w-[146px] border-l border-gray-400 pl-[7px] leading-[26px]">Default</span>
    <span className="h-full w-[130px] border-l border-gray-400" />
    <span className="h-full w-[89px] border-l border-gray-400" />
    <span className="h-full w-[89px] border-l border-gray-400" />
    <span className="h-full w-[87px] border-l border-gray-400" />
    <span className="h-full w-[86px] border-l border-gray-400" />
    <span className="h-full w-[84px] border-l border-gray-400" />
    <span className="flex h-full w-[163px] items-center gap-[5px] border-l border-gray-400 pl-[6px]">
      <svg width="30" height="17">
        {[0, 1, 2, 3, 4, 5, 6, 7].map((i) => (
          <g key={i}>
            <path d={`M${i * 4} 0h3v${13 - i}h-3z`} fill="#7c8f1e" />
            <path d={`M${i * 4} ${14 - i}h3v${3 + i}h-3z`} fill="#0f4468" />
          </g>
        ))}
      </svg>
      856/1 kb
    </span>
  </footer>
);

export default function App() {
  return (
    <div className="flex min-h-screen w-full flex-col bg-[#f0f0f0] font-['Noto_Sans','Noto_Sans_CJK_JP',sans-serif] text-gray-900 [font-feature-settings:'palt']">
      <TitleBar />
      <nav className="flex h-[26px] items-center pb-[3px] pl-[9px] text-[14px]">
        {menu.map(([label, width]) => (
          <button key={label} className={clsx('shrink-0 text-left whitespace-nowrap', width)}>{label}</button>
        ))}
      </nav>
      <Toolbars />
      <main className="flex flex-1">
        <aside className="flex w-[238px] shrink-0 flex-col border-r-2 border-gray-400">
          <MarketWatch />
          <Navigator />
        </aside>
        <div className="flex min-w-0 flex-1 flex-col pr-[5px]">
          <div className="grid grid-cols-2 gap-[2px] border-t border-l border-[#3c4650] bg-[#8f959b] py-px pl-px">
            {charts.map((data, i) => <ChartWindow key={data.symbol} data={data} active={i === 0} />)}
          </div>
          <div className="flex pt-[3px] pl-px">
            <TabStrip
              className="flex-1 pl-1"
              active={0}
              size="wide"
              tabs={[{ label: 'EURUSD,H4' }, { label: 'USDCHF,H4' }, { label: 'GBPUSD,H4' }, { label: 'USDJPY,H4' }]}
            />
            <div className="flex gap-[18px] border-t border-gray-900 pr-2">
              <button aria-label="Scroll tabs left"><svg width="6" height="8"><path d="M5 0v8L0 4z" fill="#888" /></svg></button>
              <button aria-label="Scroll tabs right"><svg width="6" height="8"><path d="M0 0v8l5-4z" fill="#888" /></svg></button>
            </div>
          </div>
        </div>
      </main>
      <Terminal />
      <StatusBar />
    </div>
  );
}
